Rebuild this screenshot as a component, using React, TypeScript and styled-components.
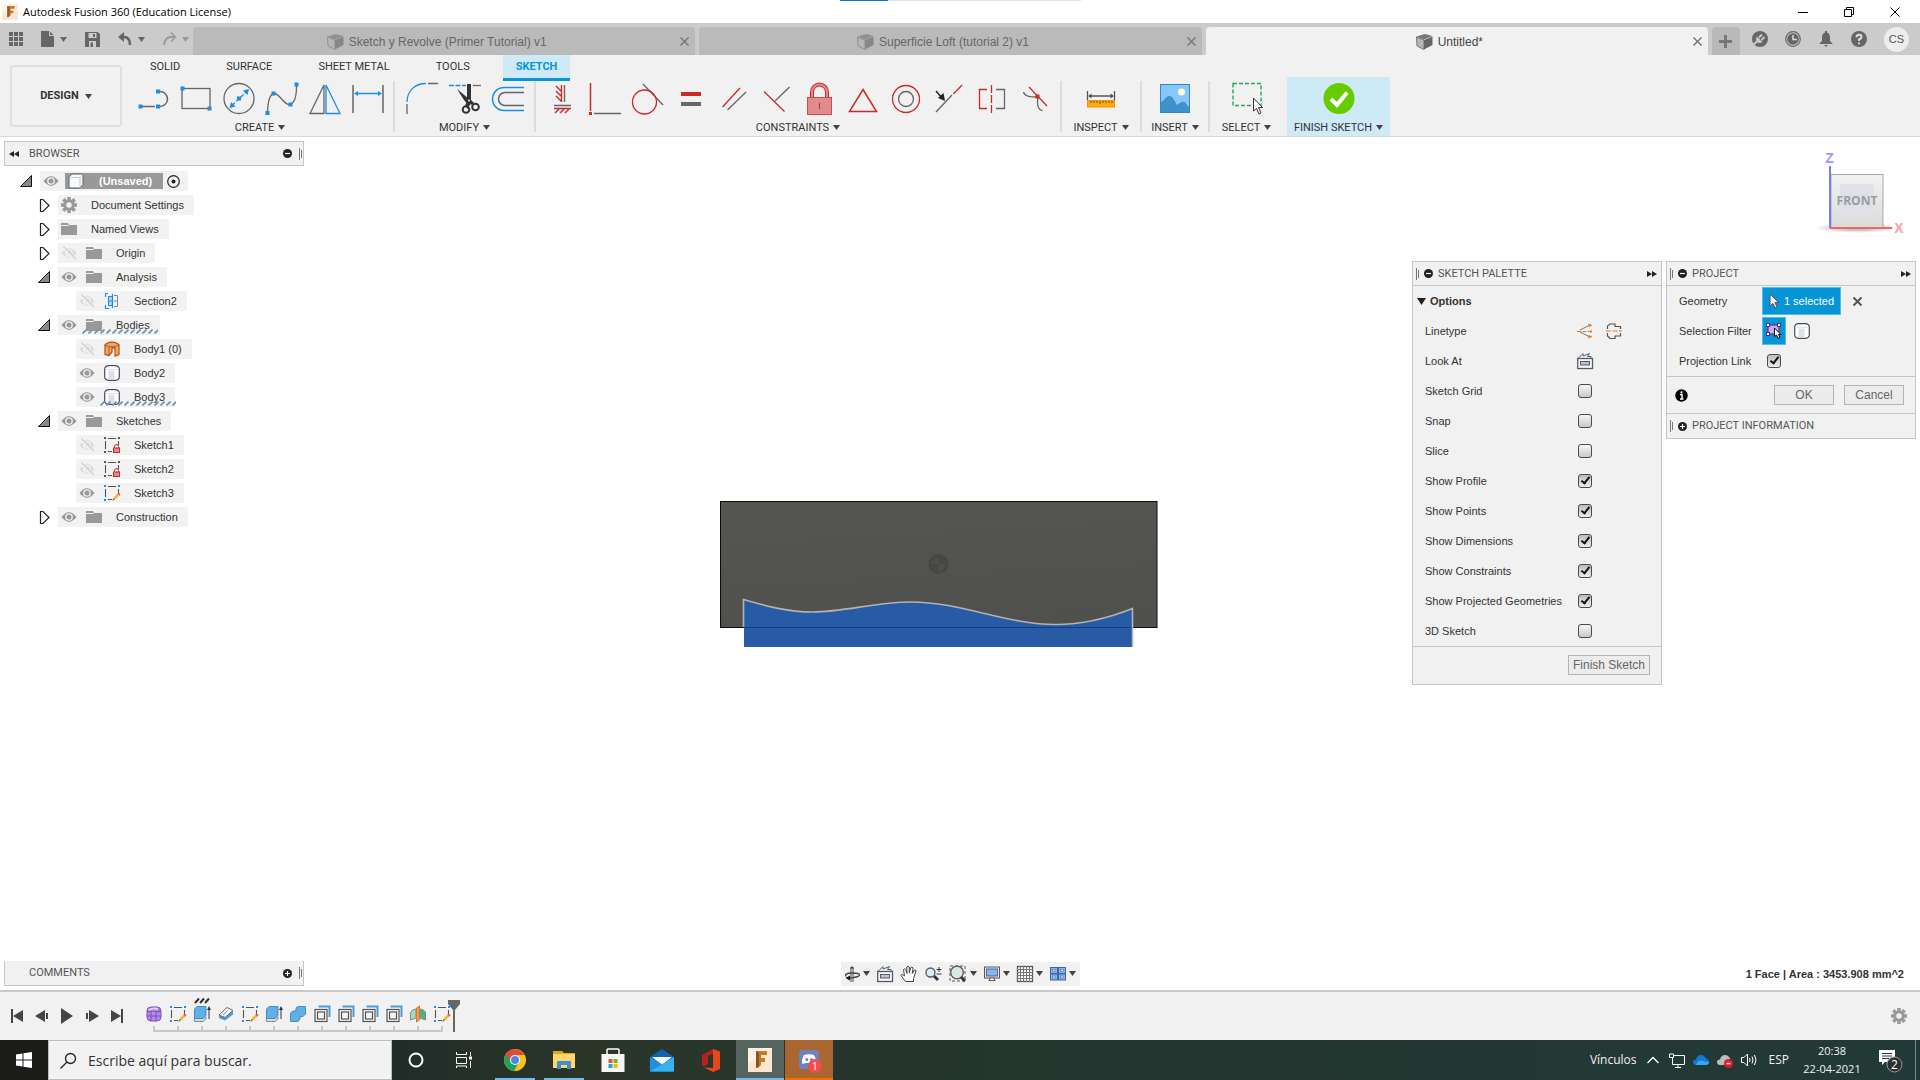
import React from "react";
import styled, { createGlobalStyle, css } from "styled-components";

const blue = "#1a8fe3";
const ink = "#666666";
const red = "#cc2a2a";
const ui = '"Liberation Sans", Arial, sans-serif';
const caps = 'Roboto, "Liberation Sans", sans-serif';
const sys = '"Open Sans", "Noto Sans", sans-serif';

const Global = createGlobalStyle`
  *, *::before, *::after { box-sizing: border-box; }
  body { margin: 0; background: #fff; font: 11px/16px ${ui}; color: #333; overflow: hidden; }
  button { font: inherit; color: inherit; background: none; border: 0; padding: 0; margin: 0; display: flex; align-items: center; justify-content: center; flex: none; }
  svg { display: block; flex: none; overflow: visible; }
  ul { list-style: none; margin: 0; padding: 0; }
`;

/* ---------- icons ---------- */

type IconProps = { w?: number; h?: number; vb?: string; children: React.ReactNode };
const Icon = ({ w = 16, h = w, vb, children }: IconProps) => (
  <svg width={w} height={h} viewBox={vb ?? `0 0 ${w} ${h}`} fill="none" aria-hidden="true">
    {children}
  </svg>
);
const Dot = ({ x, y, c = blue, s = 4 }: { x: number; y: number; c?: string; s?: number }) => (
  <rect x={x - s / 2} y={y - s / 2} width={s} height={s} fill={c} />
);
const Caret = ({ c = "#444" }: { c?: string }) => (
  <Icon w={7} h={5}>
    <path d="M0 0H7L3.5 5Z" fill={c} />
  </Icon>
);

const tools: Record<string, React.ReactNode> = {
  Line: <><path d="M2 24.5H18M23 9.5a7.5 7.5 0 0 1 0 15" stroke={ink} strokeWidth="1.5" /><Dot x={3.5} y={24.5} /><Dot x={21} y={9.5} /><Dot x={21} y={24.5} /></>,
  Rectangle: <><rect x="2" y="6.5" width="28" height="20" stroke={ink} strokeWidth="1.3" /><Dot x={2.5} y={6.5} /><Dot x={29.5} y={26.5} /></>,
  Circle: <><circle cx="16" cy="16.5" r="15" stroke={ink} strokeWidth="1.3" /><path d="M9 23.5L24 9" stroke={blue} strokeWidth="1.4" strokeDasharray="4 2" /><path d="M26 7L24.5 13L20 8.5ZM6.5 26L8 20L12.5 24.5Z" fill={blue} /><Dot x={16} y={16.5} /></>,
  Spline: <><path d="M1.5 30C2 18 4.5 12 8 11.5C14 11.5 17 22 23 22.5C29 22 30.5 15 30.5 4" stroke={ink} strokeWidth="1.3" /><Dot x={1.5} y={31} /><Dot x={7.5} y={11.5} /><Dot x={24.5} y={22.5} /><Dot x={30.5} y={2.5} /></>,
  Mirror: <><path d="M15 3V31.5H1Z" stroke={ink} strokeWidth="1.3" /><path d="M17 3V31.5H31Z" stroke={blue} strokeWidth="1.3" /></>,
  Dimension: <><path d="M1 3V31M31 3V31" stroke={ink} strokeWidth="1.5" /><path d="M4 11.5H28" stroke={blue} strokeWidth="1.5" /><path d="M2 11.5L6 9V14ZM30 11.5L26 9V14Z" fill={blue} /></>,
  Fillet: <><path d="M1 20C1 9 9 1.5 20 1.5" stroke={blue} strokeWidth="1.3" /><path d="M22 1.5H32M1 22V32" stroke={ink} strokeWidth="1.3" /></>,
  Trim: <><path d="M0 3.5H17" stroke={blue} strokeWidth="1.3" strokeDasharray="5 1.5" /><path d="M24 3.5H32" stroke={ink} strokeWidth="1.3" /><path d="M8 7L20 17L23 21L20 24L15 18Z" fill="#333" /><path d="M18 2H22V17L19 27L16 24L18 19Z" fill="#333" /><circle cx="17" cy="27.5" r="3.3" stroke="#333" strokeWidth="2" /><circle cx="26.5" cy="25" r="3.3" stroke="#333" strokeWidth="2" /><path d="M20 18L24 22" stroke="#333" strokeWidth="3" /><circle cx="20" cy="18.5" r="1" fill="#eee" /></>,
  Offset: <><path d="M32 5.5H12a11.5 11.5 0 0 0 0 23H32" stroke={blue} strokeWidth="1.5" /><path d="M32 10.5H13a6.5 6.5 0 0 0 0 13H32" stroke={ink} strokeWidth="1.5" /></>,
  "Horizontal/Vertical": <><path d="M15.5 3V20M10 4L15 9M10 9L15 14M10 14L15 19M8 26.5H25M13 27L9 31M18 27L14 31M23 27L19 31" stroke={red} strokeWidth="1.4" /><path d="M18.5 3V20M8 23.5H25" stroke={ink} strokeWidth="1.4" /></>,
  Coincident: <><path d="M1.5 1V29" stroke={red} strokeWidth="1.5" /><path d="M5 31.5H32" stroke={ink} strokeWidth="1.5" /><Dot x={1.5} y={31.5} c={red} s={3} /></>,
  Tangent: <><path d="M11 2L31 23" stroke={ink} strokeWidth="1.3" /><circle cx="12.5" cy="20" r="12" stroke={red} strokeWidth="1.3" /></>,
  Equal: <><path d="M6 12H26" stroke={red} strokeWidth="4" /><path d="M6 22H26" stroke={ink} strokeWidth="4" /></>,
  Parallel: <><path d="M4.5 25L22 6" stroke={red} strokeWidth="1.3" /><path d="M9.5 28L28 10" stroke={ink} strokeWidth="1.3" /></>,
  Perpendicular: <><path d="M3 9.5L23.5 29.5" stroke={red} strokeWidth="1.3" /><path d="M14 19L28.5 5" stroke={ink} strokeWidth="1.3" /></>,
  Fix: <><path d="M8 15V10a7.5 7.5 0 0 1 15 0V15" stroke={red} strokeWidth="4" /><path d="M8 15V10a7.5 7.5 0 0 1 15 0V15" stroke="#df8c8c" strokeWidth="2" /><rect x="3.5" y="15.5" width="24" height="17" fill="#df8c8c" stroke="#cf4a4a" /><path d="M15.5 21V27" stroke={red} /></>,
  "Equal length": <path d="M16 7.5L29.5 29.5H2.5Z" stroke={red} strokeWidth="1.5" />,
  Concentric: <><circle cx="16" cy="17" r="13.5" stroke={red} strokeWidth="1.3" /><circle cx="16" cy="17" r="7.5" stroke={ink} strokeWidth="1.3" /></>,
  Midpoint: <><path d="M3 30L19 13" stroke={ink} strokeWidth="1.3" /><path d="M20.5 12L29 3" stroke={red} strokeWidth="1.3" /><path d="M3 9L9 16" stroke="#222" strokeWidth="1.5" /><path d="M12 19L5 16L10.5 11Z" fill="#222" /></>,
  Symmetry: <><path d="M11 7.5H3.5V26.5H11" stroke={red} strokeWidth="1.3" /><path d="M15.5 3V31" stroke={red} strokeWidth="1.3" strokeDasharray="8 2" /><path d="M20 7.5H28.5V26.5H20" stroke={ink} strokeWidth="1.3" /></>,
  Curvature: <><path d="M4.5 10C6 15 12 15 19 15C18 20 18 28 23.5 28.5" stroke={ink} strokeWidth="1.3" /><path d="M10 5L28 24" stroke={red} strokeWidth="1.3" /><Dot x={18.5} y={14.5} c={red} /></>,
  Measure: <><path d="M2.5 9V18M29.5 9V18M4 14H28" stroke="#555" strokeWidth="1.3" /><path d="M3 14L6.5 11.5V16.5ZM29 14L25.5 11.5V16.5Z" fill="#555" /><rect x="2.5" y="18.5" width="27" height="6.5" fill="#ffab0f" stroke="#e8960a" /><path d="M6 19v2M9 19v2M12 19v2M15 19v3M18 19v2M21 19v2M24 19v2M27 19v2" stroke="#7a4b00" /></>,
  "Insert image": <><rect x="1.5" y="2.5" width="29" height="28" fill="#85c8fb" stroke="#3c87b8" /><circle cx="22.5" cy="10" r="3.5" fill="#fffbd8" /><path d="M2 20C6 18 7 14 10.5 14S16 20 18 23C21 21 23 19 25.5 20L30 25V30H2Z" fill="#3e92cc" /></>,
  Select: <><rect x="2" y="1.5" width="28" height="22" stroke="#1fac5b" strokeWidth="1.4" strokeDasharray="4 2" /><path d="M22.5 16V29L25.5 26.5L28 32L30 31L27.5 25.5H31.5Z" fill="#fff" stroke="#333" /></>,
  "Finish Sketch": <><circle cx="16" cy="16.5" r="15.5" fill="#66cc00" /><path d="M8 17L14 23L24 10.5" stroke="#fff" strokeWidth="4" /></>,
};

const Cube = ({ o = 1 }: { o?: number }) => (
  <Icon w={17} h={16}>
    <g opacity={o}>
      <path d="M0.5 3L8 6V15.5L1 12Z" fill="#b5b5b5" stroke="#777" />
      <path d="M8 6L16.5 2.5V11L8 15.5Z" fill="#666" />
      <path d="M0.5 2.5L9 0L16.5 2L8 5.5Z" fill="#777" />
    </g>
  </Icon>
);
const Gear = ({ c = "#999" }: { c?: string }) => (
  <Icon>
    {[0, 45, 90, 135].map((a) => (
      <path key={a} d="M8 0V4M8 12V16" stroke={c} strokeWidth="3.5" transform={`rotate(${a} 8 8)`} />
    ))}
    <circle cx="8" cy="8" r="4.3" stroke={c} strokeWidth="3" />
  </Icon>
);
const Eye = ({ off }: { off?: boolean }) =>
  off ? (
    <Icon>
      <path d="M0.5 8Q8 -1.5 15.5 8Q8 17.5 0.5 8Z" fill="#dcdcdc" />
      <circle cx="8" cy="8" r="3.2" stroke="#f2f2f2" strokeWidth="1.3" />
      <path d="M1.5 2.5L13.5 15" stroke="#f2f2f2" strokeWidth="2" />
      <path d="M2.5 1.5L15 14" stroke="#d0d0d0" strokeWidth="1.3" />
    </Icon>
  ) : (
    <Icon>
      <path d="M0.5 8Q8 -1.5 15.5 8Q8 17.5 0.5 8Z" fill="#999" />
      <circle cx="8" cy="8" r="3.2" stroke="#f2f2f2" strokeWidth="1.3" />
    </Icon>
  );
const Folder = () => (
  <Icon>
    <path d="M0 2H7L8 4H16V14H0Z" fill="#999" />
    <path d="M0 4.5H7.5" stroke="#f2f2f2" />
  </Icon>
);
const BodyIcon = () => (
  <Icon>
    <path d="M0.7 4Q1 1 4.500 0.700H11.500Q15 1 15.300 4V12Q15 15 11.500 15.300H4.500Q1 15 0.700 12Z" fill="#fff" stroke="#444c5c" strokeWidth="1.2" />
    <rect x="4.5" y="5.5" width="6" height="9" fill="#dde0e5" />
    <path d="M1.5 4.5H14.5" stroke="#e2e5ea" />
  </Icon>
);
const SurfaceIcon = () => (
  <Icon>
    <path d="M1 3.5Q8 -1.5 15 3.5V13.5L11 15V7H8V11L5 14.5L1 13.5Z" fill="#f0a668" stroke="#b65a18" strokeWidth="1.3" />
    <path d="M1 4Q8 7.5 15 4M5 6V14" stroke="#b65a18" />
  </Icon>
);
const SectionIcon = () => (
  <Icon>
    <rect x="4.5" y="3.5" width="4" height="9" fill="#a8d4f7" stroke={blue} />
    <path d="M4 0.5H1.5V4M1.5 12V15.5H5M4 8H9M8.5 1V15" stroke={blue} strokeWidth="1.2" />
    <path d="M10 2.5H13.5V13.5H10M10 8H13" stroke="#888" />
  </Icon>
);
const SketchIcon = ({ kind }: { kind: "lock" | "pencil" }) => {
  const c = kind === "lock" ? "#555" : blue;
  return (
    <Icon>
      <path d="M4 1.5H12M1.5 4V12M4 14.5H8M14.5 4V8" stroke="#555" strokeWidth="1.1" />
      <Dot x={1} y={1} c={c} s={2} /><Dot x={15} y={1} c={c} s={2} /><Dot x={1} y={15} c={c} s={2} />
      {kind === "lock" ? (
        <><path d="M10.5 11V9.5a2 2 0 0 1 4 0V11" stroke={red} /><rect x="9.5" y="11" width="6" height="4.5" fill="#e48a8a" stroke={red} /></>
      ) : (
        <><path d="M9 15L10 12L13.5 8.5L15.5 10.5L12 14Z" fill="#f6b73c" /><path d="M13.5 8.5L14.5 7.5L16.5 9.5L15.5 10.5Z" fill="#e33b3b" /><path d="M8 16L9.5 13L11 14.5Z" fill="#777" /></>
      )}
    </Icon>
  );
};
const Extrude = () => (
  <Icon>
    <path d="M0.5 11V15.5H9L12 13V11" fill="#ddd" stroke="#888" />
    <path d="M0.5 3L3 0.5H12V9.5L9.5 12.5H0.5Z" fill="#62aee6" stroke="#3f8fc9" />
    <path d="M15 3V13" stroke="#333" /><path d="M15 0L17 4H13Z" fill="#333" />
  </Icon>
);
const Shell = () => (
  <Icon>
    <path d="M4.5 0.5H15.5V11" stroke="#4c9bd6" strokeWidth="2" />
    <rect x="1" y="3.5" width="12" height="12" fill="#f4f4f4" stroke="#555" strokeWidth="1.2" />
    <rect x="3.5" y="6" width="7" height="7" stroke="#555" strokeWidth="1.2" />
  </Icon>
);
const LookAt = () => (
  <Icon>
    <rect x="0.7" y="5.5" width="14.800" height="10" fill="#fafafa" stroke="#555b66" strokeWidth="1.3" />
    <rect x="3.5" y="8.5" width="9" height="3.5" fill="#bcc2cc" stroke="#555b66" />
    <path d="M1.5 5L6 0.5V3L12.5 0.5L10.5 3.500H14V5" stroke="#555b66" />
  </Icon>
);
const Round = ({ plus }: { plus?: boolean }) => (
  <Icon w={9}>
    <circle cx="4.5" cy="4.5" r="4.5" fill="#222" />
    <path d={plus ? "M2 4.5H7M4.5 2V7" : "M2 4.5H7"} stroke="#fff" strokeWidth="1.2" />
  </Icon>
);
const Grip = () => (
  <Icon w={3} h={12}>
    <path d="M0.5 0V12M2.5 2V10" stroke="#777" />
  </Icon>
);
const Forward = () => (
  <Icon w={10} h={6}>
    <path d="M0 0L5 3L0 6ZM5 0L10 3L5 6Z" fill="#222" />
  </Icon>
);
const Back = () => (
  <Icon w={10} h={6}>
    <path d="M5 0V6L0 3ZM10 0V6L5 3Z" fill="#222" />
  </Icon>
);
const Close = ({ s = 9, c = "#777", sw = 1.5 }: { s?: number; c?: string; sw?: number }) => (
  <Icon w={s}>
    <path d={`M0.5 0.5L${s - 0.5} ${s - 0.5}M${s - 0.5} 0.5L0.5 ${s - 0.5}`} stroke={c} strokeWidth={sw} />
  </Icon>
);
const FLogo = ({ s }: { s: number }) => (
  <Icon w={s} vb="0 0 24 24">
    <rect width="24" height="24" fill="#fbe6d2" />
    <path d="M0 0H24L0 16Z" fill="#fdf1e6" />
    <path d="M8 3H19V7H13V10H17V14H13V17L10 20H8Z" fill="#c87a2c" />
    <path d="M8 3L11 5V18L8 20Z" fill="#8a5520" />
  </Icon>
);

/* ---------- window frame ---------- */

const App = styled.div`
  min-height: 100vh;
  display: flex;
  flex-direction: column;
`;
const TitleBar = styled.header`
  height: 23px;
  padding: 0 2px;
  display: flex;
  align-items: center;
  gap: 5px;
  position: relative;
  font: 11px/18px ${sys};
  color: #000;
`;
const TitleText = styled.span`
  flex: 1;
`;
const WindowButtons = styled.div`
  display: flex;
`;
const WindowButton = styled.button`
  width: 46px;
  height: 20px;
`;
const Progress = styled.div`
  position: absolute;
  top: 0;
  left: 840px;
  width: 241px;
  height: 1px;
  background: linear-gradient(90deg, #0078d7 48px, #e3e3e3 48px);
`;

const TabBar = styled.nav`
  display: flex;
  align-items: flex-end;
  gap: 4px;
  height: 32px;
  background: #cbcbcb;
`;
const QuickAccess = styled.div`
  width: 189px;
  height: 32px;
  padding-left: 9px;
  display: flex;
  align-items: center;
  gap: 18px;
`;
const QuickButton = styled.button`
  gap: 6px;
`;
const DocTab = styled.div<{ $active?: boolean }>`
  flex: 1;
  height: 28px;
  padding: 1px 6px 0 0;
  display: flex;
  align-items: center;
  border-radius: 4px 4px 0 0;
  background: ${(p) => (p.$active ? "#f1f1f1" : "#bababa")};
  color: ${(p) => (p.$active ? "#444" : "#666")};
  font-size: 12px;
`;
const DocName = styled.button`
  flex: 1;
  gap: 5px;
`;
const AddTab = styled.button`
  width: 28px;
  height: 28px;
  border-radius: 4px 4px 0 0;
  background: #b9b9b9;
`;
const Account = styled.div`
  height: 32px;
  padding: 0 11px 0 8px;
  display: flex;
  align-items: center;
  gap: 17px;
`;
const Avatar = styled.button`
  width: 25px;
  height: 25px;
  border-radius: 50%;
  background: #ededed;
  color: #555;
`;

/* ---------- ribbon ---------- */

const Ribbon = styled.section`
  display: flex;
  height: 82px;
  background: #f1f1f1;
  border-bottom: 1px solid #d9d9d9;
  font-family: ${caps};
`;
const Workspace = styled.button`
  width: 112px;
  height: 62px;
  margin: 10px 5px 0 10px;
  gap: 6px;
  border: 2px solid #dfdfdf;
  border-radius: 4px;
  font-weight: 700;
`;
const RibbonBody = styled.div`
  display: flex;
  flex-direction: column;
`;
const RibbonTabs = styled.div`
  display: flex;
  gap: 20px;
  padding-left: 10px;
  height: 22px;
`;
const RibbonTab = styled.button<{ $active?: boolean }>`
  height: 26px;
  padding: 0 13px;
  border-bottom: 3px solid transparent;
  ${(p) =>
    p.$active &&
    css`
      background: #cdeaf6;
      border-color: #0696d7;
      color: #0696d7;
      font-weight: 700;
    `}
`;
const Groups = styled.div`
  display: flex;
  height: 59px;
`;
const Group = styled.div<{ $width?: number; $primary?: boolean }>`
  ${(p) => p.$width && `width: ${p.$width}px;`}
  padding: 5px 4px 0;
  display: flex;
  flex-direction: column;
  align-items: center;
  ${(p) => p.$primary && `margin-left: 4px; background: #cdeaf6;`}
`;
const Divider = styled.div`
  width: 2px;
  height: 51px;
  margin-top: 4px;
  background: #dcdcdc;
`;
const ToolRow = styled.div`
  display: flex;
`;
const Tool = styled.button`
  width: 43px;
  height: 32px;
`;
const GroupLabel = styled.button`
  gap: 4px;
  height: 22px;
  padding-top: 5px;
`;

/* ---------- workspace ---------- */

const Main = styled.main`
  flex: 1;
  display: flex;
  flex-direction: column;
  justify-content: space-between;
  padding: 4px 4px 4px;
  position: relative;
`;
const Columns = styled.div`
  display: flex;
  justify-content: space-between;
`;
const BrowserColumn = styled.aside`
  width: 300px;
`;
const PanelHeader = styled.div`
  height: 24px;
  padding: 0 4px 0 3px;
  display: flex;
  align-items: center;
  gap: 5px;
  color: #555;
  font-family: ${caps};
`;
const RuledHeader = styled(PanelHeader)`
  border-bottom: 1px solid #c6c6c6;
`;
const DockHeader = styled(PanelHeader)<{ $openTop?: boolean }>`
  height: 25px;
  padding: 0 1px 0 4px;
  gap: 7px;
  background: #f1f1f1;
  border: 1px solid #c6c6c6;
  ${(p) => p.$openTop && `border-top: 0;`}
`;
const PanelTitle = styled.span`
  flex: 1;
`;
const DockTitle = styled(PanelTitle)`
  padding-left: 3px;
`;
const HeaderGap = styled.span`
  width: 10px;
`;
const Tree = styled.ul`
  margin-top: 5px;
  display: flex;
  flex-direction: column;
  gap: 4px;
`;
const TreeRow = styled.li<{ $level: number }>`
  display: flex;
  align-items: center;
  gap: 8px;
  height: 20px;
  padding-left: ${(p) => 16 + p.$level * 18}px;
`;
const Arrow = styled.span`
  width: 12px;
`;
const Chip = styled.div`
  position: relative;
  height: 20px;
  padding: 0 10px 0 3px;
  display: flex;
  align-items: center;
  gap: 9px;
  background: #f2f2f2;
`;
const Label = styled.span`
  margin-left: 5px;
`;
const Hatch = styled.svg`
  position: absolute;
  right: 2px;
  bottom: 1px;
  left: 24px;
  height: 5px;
`;
const RootName = styled.span`
  height: 16px;
  margin: 0 -5px 0 -3px;
  padding: 0 11px 0 3px;
  display: flex;
  align-items: center;
  gap: 15px;
  background: #999;
  color: #fff;
  font-weight: 700;
`;
const RootChip = styled(Chip)`
  padding-right: 8px;
`;

const RightColumn = styled.aside`
  display: flex;
  flex-direction: column;
  align-items: flex-end;
`;
const CubeBox = styled.div`
  height: 120px;
  padding: 6px 1px 0 0;
`;
const Palettes = styled.div`
  display: flex;
  align-items: flex-start;
  gap: 4px;
`;
const Palette = styled.section`
  width: 250px;
  background: #f1f1f1;
  border: 1px solid #c6c6c6;
`;
const Field = styled.div`
  height: 30px;
  padding-left: 12px;
  display: flex;
  align-items: center;
`;
const FieldLabel = styled.label<{ $w: number }>`
  width: ${(p) => p.$w}px;
`;
const SectionTitle = styled.button`
  height: 30px;
  padding-left: 4px;
  gap: 4px;
  font-weight: 700;
`;
const IconButton = styled.button`
  width: 16px;
  margin-right: 13px;
`;
const Check = styled.input`
  appearance: none;
  position: relative;
  width: 14px;
  height: 14px;
  margin: 0 1px;
  border: 1px solid #4a4a4a;
  border-radius: 3px;
  background: linear-gradient(#f6f6f6, #c9c9c9);
  &:checked {
    background: linear-gradient(#bdbdbd, #ececec);
  }
  &:checked::after {
    content: "";
    position: absolute;
    left: 4px;
    top: 0;
    width: 5px;
    height: 9px;
    border: solid #111;
    border-width: 0 2px 2px 0;
    transform: rotate(38deg);
  }
`;
const Pick = styled.button<{ $w: number }>`
  width: ${(p) => p.$w}px;
  height: 28px;
  gap: 5px;
  background: #0696d7;
  border: 1px solid #55bce8;
  color: #fff;
`;
const PlainIcon = styled.button`
  margin-left: 8px;
  width: 16px;
`;
const Footer = styled.div<{ $rule?: boolean }>`
  height: 38px;
  padding: 0 11px 0 8px;
  display: flex;
  align-items: center;
  justify-content: flex-end;
  gap: 10px;
  border-top: 1px solid #c6c6c6;
  border-bottom: 1px solid ${(p) => (p.$rule ? "#c6c6c6" : "transparent")};
`;
const Push = styled.button<{ $w: number }>`
  width: ${(p) => p.$w}px;
  height: 20px;
  border: 1px solid #b4b4b4;
  background: #ececec;
  color: #666;
  font-size: 12px;
`;
const InfoButton = styled.button`
  margin-right: auto;
`;
const Model = styled.div`
  position: absolute;
  left: calc(50% - 260px);
  top: 343px;
`;
const BottomRow = styled.div`
  display: grid;
  grid-template-columns: 1fr auto 1fr;
  align-items: center;
`;
const Comments = styled.div`
  width: 300px;
`;
const NavBar = styled.div`
  height: 24px;
  padding: 0 4px 0 3px;
  display: flex;
  align-items: center;
  gap: 7px;
  background: #f1f1f1;
`;
const NavButton = styled.button`
  gap: 3px;
`;
const Status = styled.strong`
  justify-self: end;
  padding-right: 12px;
`;

/* ---------- timeline ---------- */

const Timeline = styled.section`
  height: 50px;
  padding: 0 13px 0 10px;
  display: flex;
  align-items: center;
  background: #f1f1f1;
  border-top: 2px solid #c8c8c8;
`;
const Player = styled.div`
  display: flex;
  gap: 11px;
  width: 132px;
`;
const Features = styled.div`
  display: flex;
  position: relative;
  padding-top: 4px;
`;
const Feature = styled.button`
  width: 24px;
  height: 36px;
  padding-bottom: 4px;
  flex-direction: column;
  justify-content: flex-end;
  gap: 4px;
  position: relative;
`;
const Tick = styled.span`
  width: 2px;
  height: 6px;
  background: #c8c8c8;
`;
const Rail = styled.span`
  position: absolute;
  left: 11px;
  right: 11px;
  bottom: 4px;
  height: 2px;
  background: #c8c8c8;
`;
const Marker = styled.div`
  margin-left: -6px;
`;
const FeatureMark = styled.span`
  position: absolute;
  top: -2px;
  left: 4px;
`;
const TimelineSettings = styled.button`
  margin-left: auto;
`;

/* ---------- taskbar ---------- */

const Taskbar = styled.footer`
  height: 40px;
  display: flex;
  background: linear-gradient(90deg, #1c1c1a 48px, #1f2c29 20%, #2b3629 31%, #25352d 45%, #223a37);
  color: #f2f2f2;
  font: 12px/18px ${sys};
`;
const Start = styled.button`
  width: 48px;
`;
const Search = styled.label`
  width: 344px;
  padding: 1px 0 0 11px;
  display: flex;
  align-items: center;
  gap: 12px;
  background: #f2f2f2;
  border: 1px solid #bdbdbd;
`;
const SearchInput = styled.input`
  flex: 1;
  min-width: 0;
  border: 0;
  background: none;
  outline: 0;
  padding: 0;
  font: 14px/20px ${sys};
  &::placeholder {
    color: #333;
    opacity: 1;
  }
`;
const SysApp = styled.button`
  width: 48px;
`;
const Pins = styled.div`
  display: flex;
  gap: 1px;
  margin-left: 3px;
`;
const Pin = styled.button<{ $bg?: string; $line?: string; $full?: boolean }>`
  width: 48px;
  position: relative;
  background: ${(p) => p.$bg ?? "transparent"};
  &::after {
    content: "";
    position: absolute;
    bottom: 0;
    left: ${(p) => (p.$full ? 0 : 4)}px;
    right: ${(p) => (p.$full ? 0 : 4)}px;
    height: 2px;
    background: ${(p) => p.$line ?? "transparent"};
  }
`;
const Tray = styled.div`
  margin-left: auto;
  display: flex;
  align-items: center;
  gap: 8px;
`;
const Language = styled.button`
  padding-left: 4px;
`;
const Clock = styled.time`
  width: 70px;
  text-align: center;
  font-size: 11px;
`;
const ShowDesktop = styled.button`
  width: 5px;
  height: 40px;
  border-left: 1px solid #7b8a86;
`;
const Notices = styled.button`
  width: 32px;
`;

/* ---------- data ---------- */

type Node = { name: string; level: number; arrow?: "open" | "closed"; eye?: "on" | "off"; icon: React.ReactNode; hatch?: boolean };
const nodes: Node[] = [
  { name: "Document Settings", level: 1, arrow: "closed", icon: <Gear /> },
  { name: "Named Views", level: 1, arrow: "closed", icon: <Folder /> },
  { name: "Origin", level: 1, arrow: "closed", eye: "off", icon: <Folder /> },
  { name: "Analysis", level: 1, arrow: "open", eye: "on", icon: <Folder /> },
  { name: "Section2", level: 2, eye: "off", icon: <SectionIcon /> },
  { name: "Bodies", level: 1, arrow: "open", eye: "on", icon: <Folder />, hatch: true },
  { name: "Body1 (0)", level: 2, eye: "off", icon: <SurfaceIcon /> },
  { name: "Body2", level: 2, eye: "on", icon: <BodyIcon /> },
  { name: "Body3", level: 2, eye: "on", icon: <BodyIcon />, hatch: true },
  { name: "Sketches", level: 1, arrow: "open", eye: "on", icon: <Folder /> },
  { name: "Sketch1", level: 2, eye: "off", icon: <SketchIcon kind="lock" /> },
  { name: "Sketch2", level: 2, eye: "off", icon: <SketchIcon kind="lock" /> },
  { name: "Sketch3", level: 2, eye: "on", icon: <SketchIcon kind="pencil" /> },
  { name: "Construction", level: 1, arrow: "closed", eye: "on", icon: <Folder /> },
];

const options: [string, boolean][] = [
  ["Sketch Grid", false],
  ["Snap", false],
  ["Slice", false],
  ["Show Profile", true],
  ["Show Points", true],
  ["Show Dimensions", true],
  ["Show Constraints", true],
  ["Show Projected Geometries", true],
  ["3D Sketch", false],
];

type GroupDef = { label: string; tools: string[]; width?: number; primary?: boolean; divider?: boolean };
const groups: GroupDef[] = [
  { label: "CREATE", tools: ["Line", "Rectangle", "Circle", "Spline", "Mirror", "Dimension"], divider: true },
  { label: "MODIFY", tools: ["Fillet", "Trim", "Offset"], width: 139, divider: true },
  { label: "CONSTRAINTS", tools: ["Horizontal/Vertical", "Coincident", "Tangent", "Equal", "Parallel", "Perpendicular", "Fix", "Equal length", "Concentric", "Midpoint", "Symmetry", "Curvature"], divider: true },
  { label: "INSPECT", tools: ["Measure"], width: 78, divider: true },
  { label: "INSERT", tools: ["Insert image"], width: 66, divider: true },
  { label: "SELECT", tools: ["Select"], width: 73 },
  { label: "FINISH SKETCH", tools: ["Finish Sketch"], width: 103, primary: true },
];

const features: [string, React.ReactNode][] = [
  ["Form", <Icon><rect x="1" y="1" width="14" height="14" rx="4" fill="#b48be8" stroke="#7d4fc4" /><path d="M1 6Q6 4 15 6M5 5V15M10 5V15M1 10H15M11 2L14 5" stroke="#7d4fc4" /><path d="M3 4Q7 1.5 12 3" stroke="#e2cffa" strokeWidth="2" /></Icon>],
  ["Sketch 1", <SketchIcon kind="pencil" />],
  ["Extrude 1", <Extrude />],
  ["Plane", <Icon><path d="M1 9.5L9 2L15 4.5V8.5L7 14.5L1 12Z" fill="#4c9bd6" /><path d="M1 9L9 1.5L15 4.5L7 11.5Z" fill="#fafafa" stroke="#666" /><path d="M5 9L10 4.5" stroke="#888" /></Icon>],
  ["Sketch 2", <SketchIcon kind="pencil" />],
  ["Extrude 2", <Extrude />],
  ["Combine", <Icon><path d="M0.5 7L3 5H6V2L8 0.5H15.5V8L13 10.5H10V13L8 15.5H0.5Z" fill="#62aee6" stroke="#3f8fc9" /></Icon>],
  ["Shell 1", <Shell />],
  ["Shell 2", <Shell />],
  ["Shell 3", <Shell />],
  ["Shell 4", <Shell />],
  ["Mirror", <Icon><path d="M0.5 14V7Q2 3 6 3V12Z" fill="#a9d7b8" stroke="#888" /><path d="M15.5 14V6Q13 3 10 3V12Z" fill="#4cb774" stroke="#888" /><path d="M6.5 2L9.5 0V14L6.5 16Z" fill="#ef9c5a" stroke="#d0763a" /></Icon>],
  ["Sketch 3", <SketchIcon kind="pencil" />],
];

const quick: [string, React.ReactNode, string | null][] = [
  ["Data panel", <Icon w={14}>{[0, 5, 10].map((y) => [0, 5, 10].map((x) => <rect key={x + "-" + y} x={x} y={y} width="4" height="4" fill="#666" />))}</Icon>, null],
  ["File", <Icon w={13} h={16}><path d="M0 0H8V5H13V16H0Z" fill="#666" /><path d="M9 0.5L12.500 4H9Z" fill="#666" /></Icon>, "#666"],
  ["Save", <Icon w={15}><path d="M0 0H12.5L15 2V15H0Z" fill="#666" /><path d="M3.5 1H11.5V6H3.5ZM4 9H11V15H4Z" fill="#ccc" /><path d="M8 2H10V5H8ZM5.5 10.5H8V15H5.5Z" fill="#666" /></Icon>, null],
  ["Undo", <Icon w={14} h={14}><path d="M3 5H6Q12 5 12 13" stroke="#666" strokeWidth="2.5" /><path d="M0 5L6 0V10Z" fill="#666" /></Icon>, "#666"],
  ["Redo", <Icon w={13} h={14}><path d="M11 5H8Q2 5 1 13" stroke="#999" strokeWidth="2" /><path d="M8 0.5L12.500 5L8 9.5" stroke="#999" strokeWidth="1.5" /></Icon>, "#999"],
];

const ViewCube = () => (
  <svg width="98" height="90" viewBox="0 0 98 90" role="img" aria-label="View cube">
    <defs>
      <linearGradient id="face" x1="0" y1="0" x2="0" y2="1"><stop offset="0" stopColor="#f2f2f2" /><stop offset="1" stopColor="#dadada" /></linearGradient>
      <radialGradient id="floor"><stop offset="0" stopColor="#888" stopOpacity=".8" /><stop offset="1" stopColor="#888" stopOpacity="0" /></radialGradient>
    </defs>
    <ellipse cx="40" cy="81" rx="43" ry="5" fill="url(#floor)" />
    <rect x="14" y="27.5" width="52" height="53" fill="url(#face)" stroke="#a9a9a9" />
    <rect x="23" y="37" width="34" height="33" fill="#dfe1e6" />
    <path d="M13 19V81" stroke="#7a7af2" strokeWidth="2" />
    <path d="M13 81H75" stroke="#e66" strokeWidth="2" />
    <text x="12.500" y="16" textAnchor="middle" fontFamily={ui} fontWeight="700" fontSize="14" fill="#9a9aff">Z</text>
    <text x="82" y="86" textAnchor="middle" fontFamily={ui} fontWeight="700" fontSize="14" fill="#ffa0a0">X</text>
    <text x="40" y="58" textAnchor="middle" fontFamily={sys} fontWeight="700" fontSize="12" fill="#9a9ca3">FRONT</text>
  </svg>
);

const SolidModel = () => (
  <svg width="480" height="180" viewBox="0 0 480 180" role="img" aria-label="Model, front view">
    <defs>
      <linearGradient id="solid" x1="0" y1="0" x2="0.2" y2="1"><stop offset="0" stopColor="#555651" /><stop offset="1" stopColor="#50504e" /></linearGradient>
    </defs>
    <rect x="20.5" y="21.5" width="436.5" height="126" fill="url(#solid)" stroke="#0c0c0c" />
    <g fill="#464644">
      <circle cx="238.5" cy="84" r="8.5" fill="none" stroke="#464644" strokeWidth="3" />
      <path d="M238.5 84H231.5A7 7 0 0 1 238.5 77ZM238.5 84H245.5A7 7 0 0 1 238.5 91Z" fill="#4e4e4c" />
      <path d="M238.5 84V77A7 7 0 0 1 245.5 84ZM238.5 84V91A7 7 0 0 1 231.5 84Z" />
    </g>
    <path d="M44 120.5C68 127 88 132.5 112 132.5C145 132.5 175 122.5 211 122.5C262 122.5 305 145 356 145C384 145 410 138 432.5 129V167H44Z" fill="#285ba6" />
    <path d="M44 147.5H432" stroke="#123d80" />
    <path d="M43.5 147V119.5C68 126.5 88 132 112 132C145 132 175 122 211 122C262 122 305 144.5 356 144.5C384 144.5 410 137.5 432.5 128.5V166" stroke="#b5b3b1" strokeWidth="1.6" fill="none" />
  </svg>
);

const Hatching = ({ id }: { id: string }) => (
  <Hatch aria-hidden="true" width="76">
    <defs>
      <pattern id={id} width="6" height="5" patternUnits="userSpaceOnUse"><path d="M0.5 4.5L4.5 0.5" stroke="#7c8fb5" strokeWidth="1.8" /></pattern>
    </defs>
    <rect width="100%" height="5" fill={`url(#${id})`} />
  </Hatch>
);

const ArrowIcon = ({ open }: { open: boolean }) =>
  open ? (
    <Icon w={12}>
      <path d="M11.5 0.5V11.5H0.5Z" fill="#888" stroke="#111" />
    </Icon>
  ) : (
    <Icon w={12} h={13}>
      <path d="M2.5 0.5H5L11 6.5L5 12.5H2.5Z" fill="#fff" stroke="#222" strokeWidth="1.2" />
    </Icon>
  );

export default function Fusion() {
  return (
    <App>
      <Global />
      <TitleBar>
        <FLogo s={16} />
        <TitleText>Autodesk Fusion 360 (Education License)</TitleText>
        <Progress />
        <WindowButtons>
          <WindowButton aria-label="Minimize"><Icon w={10}><path d="M0 5.5H10" stroke="#000" /></Icon></WindowButton>
          <WindowButton aria-label="Restore"><Icon w={10}><path d="M0.5 2.5H7.5V9.5H0.5ZM2.5 2.5V0.5H9.5V7.5H7.5" stroke="#000" /></Icon></WindowButton>
          <WindowButton aria-label="Close"><Close s={10} c="#000" sw={1} /></WindowButton>
        </WindowButtons>
      </TitleBar>

      <TabBar>
        <QuickAccess>
          {quick.map(([name, icon, caret]) => (
            <QuickButton key={name} aria-label={name}>{icon}{caret && <Caret c={caret} />}</QuickButton>
          ))}
        </QuickAccess>
        {["Sketch y Revolve (Primer Tutorial) v1", "Superficie Loft (tutorial 2) v1", "Untitled*"].map((name, i) => (
          <DocTab key={name} $active={i === 2}>
            <DocName><Cube o={i === 2 ? 1 : 0.6} />{name}</DocName>
            <button aria-label={`Close ${name}`}><Close /></button>
          </DocTab>
        ))}
        <AddTab aria-label="New design"><Icon w={13}><path d="M0 6.5H13M6.5 0V13" stroke="#777" strokeWidth="3" /></Icon></AddTab>
        <Account>
          <button aria-label="Extensions"><Icon><circle cx="8" cy="8" r="8" fill="#666" /><path d="M0.5 14.500L6 9.500" stroke="#cbcbcb" strokeWidth="2" /><path d="M5 5.500L10.500 11Q7 13 5 11T5 5.500Z" fill="#cbcbcb" /><path d="M7 6.500L10 3.500M9.500 9L12.500 6" stroke="#cbcbcb" strokeWidth="1.800" /></Icon></button>
          <button aria-label="Job status"><Icon><circle cx="8" cy="8" r="7.3" stroke="#666" strokeWidth="1.2" /><circle cx="8" cy="8" r="5.8" fill="#666" /><path d="M8 4V8.5H12" stroke="#ddd" strokeWidth="1.5" /></Icon></button>
          <button aria-label="Notifications"><Icon><path d="M7 0H9V1.5Q12 2.5 12 6.5V10L15 13H1L4 10V6.5Q4 2.5 7 1.5ZM6 14H10L8 16Z" fill="#666" /></Icon></button>
          <button aria-label="Help"><Icon><circle cx="8" cy="8" r="8" fill="#666" /><path d="M5.5 6.2Q5.5 3.7 8 3.7T10.5 6Q10.5 7.5 8 8.5V10" stroke="#ddd" strokeWidth="2" /><path d="M7 11.5H9V13.2H7Z" fill="#ddd" /></Icon></button>
          <Avatar>CS</Avatar>
        </Account>
      </TabBar>

      <Ribbon>
        <Workspace>DESIGN <Caret /></Workspace>
        <RibbonBody>
          <RibbonTabs>
            {["SOLID", "SURFACE", "SHEET METAL", "TOOLS", "SKETCH"].map((t) => (
              <RibbonTab key={t} $active={t === "SKETCH"}>{t}</RibbonTab>
            ))}
          </RibbonTabs>
          <Groups>
            {groups.map((g) => (
              <React.Fragment key={g.label}>
                <Group $width={g.width} $primary={g.primary}>
                  <ToolRow>
                    {g.tools.map((t) => (
                      <Tool key={t} aria-label={t}><Icon w={32}>{tools[t]}</Icon></Tool>
                    ))}
                  </ToolRow>
                  <GroupLabel>{g.label} <Caret /></GroupLabel>
                </Group>
                {g.divider && <Divider />}
              </React.Fragment>
            ))}
          </Groups>
        </RibbonBody>
      </Ribbon>

      <Main>
        <Model><SolidModel /></Model>
        <Columns>
          <BrowserColumn>
            <DockHeader>
              <Back /><DockTitle>BROWSER</DockTitle><Round /><Grip />
            </DockHeader>
            <Tree>
              <TreeRow $level={0}>
                <Arrow><ArrowIcon open /></Arrow>
                <RootChip>
                  <Eye />
                  <RootName>
                    <Icon><path d="M1 4L4 1H15V11.5L12 15H1Z" fill="#f7f8fa" stroke="#5b6270" /><path d="M12 4.5V15M1 4.5H12L15 1.5" stroke="#c4c8d0" /></Icon>
                    (Unsaved)
                  </RootName>
                  <Icon w={13}><circle cx="6.5" cy="6.5" r="5.8" stroke="#222" strokeWidth="1.2" /><circle cx="6.5" cy="6.5" r="2" fill="#222" /></Icon>
                </RootChip>
              </TreeRow>
              {nodes.map((n) => (
                <TreeRow key={n.name} $level={n.level}>
                  <Arrow>{n.arrow && <ArrowIcon open={n.arrow === "open"} />}</Arrow>
                  <Chip>
                    {n.eye && <Eye off={n.eye === "off"} />}
                    {n.icon}
                    <Label>{n.name}</Label>
                    {n.hatch && <Hatching id={"hatch" + n.name} />}
                  </Chip>
                </TreeRow>
              ))}
            </Tree>
          </BrowserColumn>

          <RightColumn>
            <CubeBox><ViewCube /></CubeBox>
            <Palettes>
              <Palette>
                <RuledHeader><Grip /><Round /><PanelTitle>SKETCH PALETTE</PanelTitle><Forward /></RuledHeader>
                <SectionTitle><Icon w={9} h={7}><path d="M0 0H9L4.5 7Z" fill="#222" /></Icon>Options</SectionTitle>
                <Field>
                  <FieldLabel as="span" $w={152}>Linetype</FieldLabel>
                  <IconButton aria-label="Construction"><Icon><path d="M13 2L3 7M3 9L13 14" stroke="#777" /><path d="M0 8.5H16" stroke="#e8762c" strokeDasharray="4 1.5" /><path d="M11 1L15 3M11 15L15 13M14 1L12 4M14 15L12 12M14 7V10" stroke="#e8762c" /></Icon></IconButton>
                  <IconButton aria-label="Centerline"><Icon><path d="M1.5 6V3L4 1H9V3.5H14.5V6M1.5 10V13L4 15.5H9V13H14.5V10" stroke="#555" strokeWidth="1.2" /><path d="M0 8H16" stroke="#e8762c" strokeWidth="1.2" strokeDasharray="5 1.5" /></Icon></IconButton>
                </Field>
                <Field>
                  <FieldLabel as="span" $w={152}>Look At</FieldLabel>
                  <IconButton aria-label="Look At"><LookAt /></IconButton>
                </Field>
                {options.map(([name, on]) => (
                  <Field key={name}>
                    <FieldLabel htmlFor={name} $w={152}>{name}</FieldLabel>
                    <Check id={name} type="checkbox" defaultChecked={on} />
                  </Field>
                ))}
                <Footer><Push $w={82}>Finish Sketch</Push></Footer>
              </Palette>

              <Palette>
                <RuledHeader><Grip /><Round /><PanelTitle>PROJECT</PanelTitle><Forward /></RuledHeader>
                <Field>
                  <FieldLabel as="span" $w={83}>Geometry</FieldLabel>
                  <Pick $w={79}>
                    <Icon w={10} h={16}><path d="M1 1V13L4 10.5L6 15L8 14L6 9.5H9.5Z" fill="#eee" stroke="#555" /></Icon>
                    1 selected
                  </Pick>
                  <PlainIcon aria-label="Clear selection"><Close s={9} c="#555" sw={2} /></PlainIcon>
                </Field>
                <Field>
                  <FieldLabel as="span" $w={83}>Selection Filter</FieldLabel>
                  <Pick $w={24} aria-label="Specified entities">
                    <Icon><rect x="2" y="2" width="11" height="9" fill="#cfa8f2" stroke="#5b2c91" strokeWidth="1.2" />{[[2, 2], [13, 2], [2, 11]].map(([x, y]) => <g key={x + "," + y}><Dot x={x} y={y} c="#5b2c91" s={4} /><Dot x={x} y={y} c="#fff" s={2} /></g>)}<path d="M8.5 5V13.5L10.5 12L12 15.5L14 14.5L12.5 11.5H15Z" fill="#fff" stroke="#111" /></Icon>
                  </Pick>
                  <PlainIcon aria-label="Bodies"><BodyIcon /></PlainIcon>
                </Field>
                <Field>
                  <FieldLabel htmlFor="projection-link" $w={87}>Projection Link</FieldLabel>
                  <Check id="projection-link" type="checkbox" defaultChecked />
                </Field>
                <Footer $rule>
                  <InfoButton aria-label="Information"><Icon w={13}><circle cx="6.5" cy="6.5" r="6.2" fill="#000" /><path d="M5 5.5H7V10M5 10H8.5" stroke="#fff" strokeWidth="1.5" /><circle cx="6.5" cy="3.3" r="1.1" fill="#fff" /></Icon></InfoButton>
                  <Push $w={60}>OK</Push>
                  <Push $w={60}>Cancel</Push>
                </Footer>
                <PanelHeader><Grip /><Round plus /><PanelTitle>PROJECT INFORMATION</PanelTitle></PanelHeader>
              </Palette>
            </Palettes>
          </RightColumn>
        </Columns>

        <BottomRow>
          <Comments>
            <DockHeader $openTop><HeaderGap /><DockTitle>COMMENTS</DockTitle><Round plus /><Grip /></DockHeader>
          </Comments>
          <NavBar>
            <NavButton aria-label="Orbit"><Icon><path d="M8 1V16" stroke="#444" strokeWidth="3" /><path d="M8 1V16" stroke="#fff" /><path d="M6 2.5L8 0L10 2.5Z" fill="#444" /><path d="M2 10.5Q0 7 8 7T15.5 9Q15 11.5 4 12" stroke="#444" strokeWidth="1.3" /><path d="M1.5 12L6 9.5V14.5Z" fill="#111" /></Icon><Caret /></NavButton>
            <NavButton aria-label="Look At"><LookAt /></NavButton>
            <NavButton aria-label="Pan"><Icon w={18}><path d="M5.5 16.5L1 10.5Q1.5 8.5 4.5 11L3.5 4.5Q4.5 3 5.8 4.5L7 8.5L6.8 2Q8 0.5 9.3 2V8L10.8 2.5Q12 1.5 13 3L12.2 8.5L14.5 5Q16 4.5 16 6L13.5 13.5V16.5Z" fill="#fff" stroke="#444" /></Icon></NavButton>
            <NavButton aria-label="Zoom"><Icon w={17} h={16}><circle cx="5.5" cy="6.5" r="4.5" fill="#dcecee" stroke="#556" strokeWidth="1.3" /><path d="M9 10L13 14" stroke="#334" strokeWidth="3" /><path d="M11.5 3.5H16.5M14 1V6M11.5 8H16.5" stroke="#333" /></Icon></NavButton>
            <NavButton aria-label="Fit"><Icon w={18} h={17}><rect x="1" y="1" width="15" height="15" stroke="#555" strokeDasharray="3 2" /><circle cx="8" cy="7.5" r="6.3" fill="#d8e9ea" stroke="#555" strokeWidth="1.3" /><path d="M12 12L16 16" stroke="#334" strokeWidth="3" /></Icon><Caret /></NavButton>
            <NavButton aria-label="Display Settings"><Icon><rect x="0.5" y="1" width="15" height="11" fill="#eee" stroke="#555" /><rect x="2.5" y="3" width="11" height="7" fill="#8db4e6" stroke="#3c66a5" /><path d="M5 14.5H11L10 12H6Z" fill="#fff" stroke="#555" /></Icon><Caret /></NavButton>
            <NavButton aria-label="Grid"><Icon><rect x="0.5" y="0.5" width="15" height="15" fill="#fff" stroke="#555" strokeWidth="1.3" /><path d="M3.5 0V16M6.5 0V16M9.5 0V16M12.5 0V16M0 3.5H16M0 6.5H16M0 9.5H16M0 12.5H16" stroke="#777" /></Icon><Caret /></NavButton>
            <NavButton aria-label="Viewports"><Icon>{[[0.5, 1.5], [8.5, 1.5], [0.5, 8], [8.5, 8]].map(([x, y]) => <g key={x + "," + y}><rect x={x} y={y} width="7" height="6" fill="#8db4e6" stroke="#3c66a5" /><rect x={x + 2} y={y + 2} width="3" height="2" fill="#c9dcf5" stroke="#3c66a5" strokeWidth=".5" /></g>)}</Icon><Caret /></NavButton>
          </NavBar>
          <Status>1 Face | Area : 3453.908 mm^2</Status>
        </BottomRow>
      </Main>

      <Timeline>
        <Player>
          <button aria-label="To start"><Icon w={14}><path d="M2 0V14" stroke="#444" strokeWidth="2" /><path d="M13 1V13L3 7Z" fill="#444" /></Icon></button>
          <button aria-label="Step back"><Icon w={14}><path d="M10 1V13L0 7ZM11 4H13V10H11Z" fill="#444" /></Icon></button>
          <button aria-label="Play"><Icon w={14} h={16}><path d="M1 0L13 8L1 16Z" fill="#444" /></Icon></button>
          <button aria-label="Step forward"><Icon w={14}><path d="M4 1V13L14 7ZM1 4H3V10H1Z" fill="#444" /></Icon></button>
          <button aria-label="To end"><Icon w={14}><path d="M12 0V14" stroke="#444" strokeWidth="2" /><path d="M1 1V13L11 7Z" fill="#444" /></Icon></button>
        </Player>
        <Features>
          <Rail />
          {features.map(([name, icon], i) => (
            <Feature key={name} aria-label={name}>
              {i === 2 && <FeatureMark><Icon w={16} h={5}><path d="M1 5L5 0.5M6 5L10 0.5M11 5L15 0.5" stroke="#333" strokeWidth="2" /></Icon></FeatureMark>}
              {icon}
              <Tick />
            </Feature>
          ))}
        </Features>
        <Marker><Icon w={12} h={32}><path d="M0 0H12V4L7 10H5L0 4Z" fill="#666" /><path d="M6 8V32" stroke="#666" strokeWidth="2" /></Icon></Marker>
        <TimelineSettings aria-label="Timeline settings"><Gear /></TimelineSettings>
      </Timeline>

      <Taskbar>
        <Start aria-label="Start"><Icon><path d="M0 2.5L6.5 1.5V7.5H0ZM7.5 1.3L16 0V7.5H7.5ZM0 8.5H6.5V14.5L0 13.5ZM7.5 8.5H16V16L7.5 14.7Z" fill="#fff" /></Icon></Start>
        <Search>
          <Icon><circle cx="10.5" cy="5.5" r="5" stroke="#222" strokeWidth="1.3" /><path d="M7 9L0.5 15.5" stroke="#222" strokeWidth="1.3" /></Icon>
          <SearchInput aria-label="Buscar" placeholder="Escribe aquí para buscar." />
        </Search>
        <SysApp aria-label="Cortana"><Icon><circle cx="8" cy="8" r="6.5" stroke="#fff" strokeWidth="2" /></Icon></SysApp>
        <SysApp aria-label="Task view"><Icon><path d="M0.5 0V2.5H10.5V0M0.5 5.5H10.5V11.5H0.5ZM0.5 16V14H10.5V16M14.5 0V4M14.5 9V16" stroke="#fff" /><rect x="13" y="4.5" width="3" height="3" fill="#fff" /></Icon></SysApp>
        <Pins>
          <Pin aria-label="Chrome" $line="#76b9ed"><Icon w={22}><circle cx="11" cy="11" r="11" fill="#fbc117" /><path d="M11 11L1.5 5.5A11 11 0 0 0 10 22L15 13Z" fill="#20a05a" /><path d="M1.5 5.5A11 11 0 0 1 20.5 6H11L7 12Z" fill="#de4a3c" /><circle cx="11" cy="11" r="5" fill="#fff" /><circle cx="11" cy="11" r="4" fill="#4a86f0" /></Icon></Pin>
          <Pin aria-label="Explorador" $line="#76b9ed"><Icon w={22} h={18}><path d="M0 0H9L11 2H22V17H0Z" fill="#e0a51f" /><path d="M0 3H22V17H0Z" fill="#ffd667" /><path d="M4 18V11Q4 10 5 10H17Q18 10 18 11V18H14V14H8V18Z" fill="#3c8fd6" /></Icon></Pin>
          <Pin aria-label="Store"><Icon w={24}><path d="M6 6V2Q6 1 7 1H17Q18 1 18 2V6" stroke="#fff" strokeWidth="1.5" /><path d="M0.5 6H23.5V24H0.5Z" fill="#f6f6f6" /><path d="M7.5 11H11.5V15H7.5Z" fill="#e8502a" /><path d="M12.5 11H16.5V15H12.5Z" fill="#7db700" /><path d="M7.5 16H11.5V20H7.5Z" fill="#1aa3ea" /><path d="M12.5 16H16.5V20H12.5Z" fill="#fdb800" /></Icon></Pin>
          <Pin aria-label="Mail"><Icon w={24} h={23}><path d="M0 8L12 0L24 8V12H0Z" fill="#0f63b0" /><path d="M2 8H22L12 16Z" fill="#f4f4f4" /><path d="M0 8L24 22.5H0Z" fill="#1e90dd" /><path d="M24 8L0 22.5H24Z" fill="#35b3f0" /></Icon></Pin>
          <Pin aria-label="Office"><Icon w={18} h={23}><path d="M0 6L11 0V5L6 7V15L2 17.5L0 16Z" fill="#b5221c" /><path d="M11 0L18 2.5V20L11 23L2 18.5L11 19Z" fill="#e8471b" /></Icon></Pin>
          <Pin aria-label="Fusion 360" $bg="#56645f" $line="#76b9ed" $full><FLogo s={24} /></Pin>
          <Pin aria-label="Discord" $bg="#a9672f" $line="#ff6a00" $full>
            <Icon w={22} h={23}>
              <rect x="1" y="1" width="20" height="19" rx="3" fill="#6d80c4" />
              <path d="M6 6Q11 4.500 16 6Q19 11 17.500 15L14 14H8L4.500 15Q3 11 6 6Z" fill="#fff" />
              <circle cx="8.8" cy="10.5" r="1.5" fill="#6d80c4" /><circle cx="13.5" cy="10.5" r="1.5" fill="#6d80c4" />
              <circle cx="17" cy="17" r="7" fill="#f04d4d" />
              <text x="17" y="21" textAnchor="middle" fontFamily={sys} fontSize="11" fill="#fff">1</text>
            </Icon>
          </Pin>
        </Pins>
        <Tray>
          <span>Vínculos</span>
          <button aria-label="Iconos ocultos"><Icon><path d="M2.5 11L8 5.5L13.5 11" stroke="#fff" strokeWidth="1.3" /></Icon></button>
          <button aria-label="Red"><Icon><path d="M4 3.5H15.5V12.5H3.5V6M6 15.5H12M9 12.5V15M0.5 2H4.5V5.5H0.5Z" stroke="#fff" /></Icon></button>
          <button aria-label="OneDrive"><Icon><path d="M3 13Q0 12.5 0 10Q0 7.5 3 7.5Q4 3 8 3Q11.5 3 13 6.5Q16 7.5 16 10T13.5 13Z" fill="#0f7ad8" /><path d="M3 13Q5 7 10 9L13 10Q16 9 16 10.5T13.5 13Z" fill="#35a9f2" /></Icon></button>
          <button aria-label="OneDrive personal"><Icon><path d="M3 13Q0 12.5 0 10Q0 7.5 3 7.5Q4 3 8 3Q11.5 3 13 6.5V13Z" fill="#bdbdbd" /><circle cx="11.5" cy="11.5" r="4.5" fill="#d81e2c" /><path d="M9.5 11.5H13.5" stroke="#fff" strokeWidth="1.5" /></Icon></button>
          <button aria-label="Volumen"><Icon><path d="M0.5 5.5H3L6.5 2V14L3 10.5H0.5ZM8.5 6Q9.5 8 8.5 10M11 4.5Q13 8 11 11.5M13.5 3Q16.5 8 13.5 13" stroke="#fff" /></Icon></button>
          <Language>ESP</Language>
          <Clock>20:38<br />22-04-2021</Clock>
          <Notices aria-label="Notificaciones">
            <Icon w={24} h={24}>
              <path d="M0 2H16V14H6L3 17V14H0Z" fill="#fff" />
              <path d="M3 5.5H13M3 8H13M3 10.5H10" stroke="#263a36" />
              <circle cx="15.5" cy="16.5" r="7.5" fill="#2b2f2e" stroke="#9a9a9a" />
              <text x="15.5" y="21" textAnchor="middle" fontFamily={sys} fontSize="12" fill="#fff">2</text>
            </Icon>
          </Notices>
          <ShowDesktop aria-label="Mostrar escritorio" />
        </Tray>
      </Taskbar>
    </App>
  );
}
